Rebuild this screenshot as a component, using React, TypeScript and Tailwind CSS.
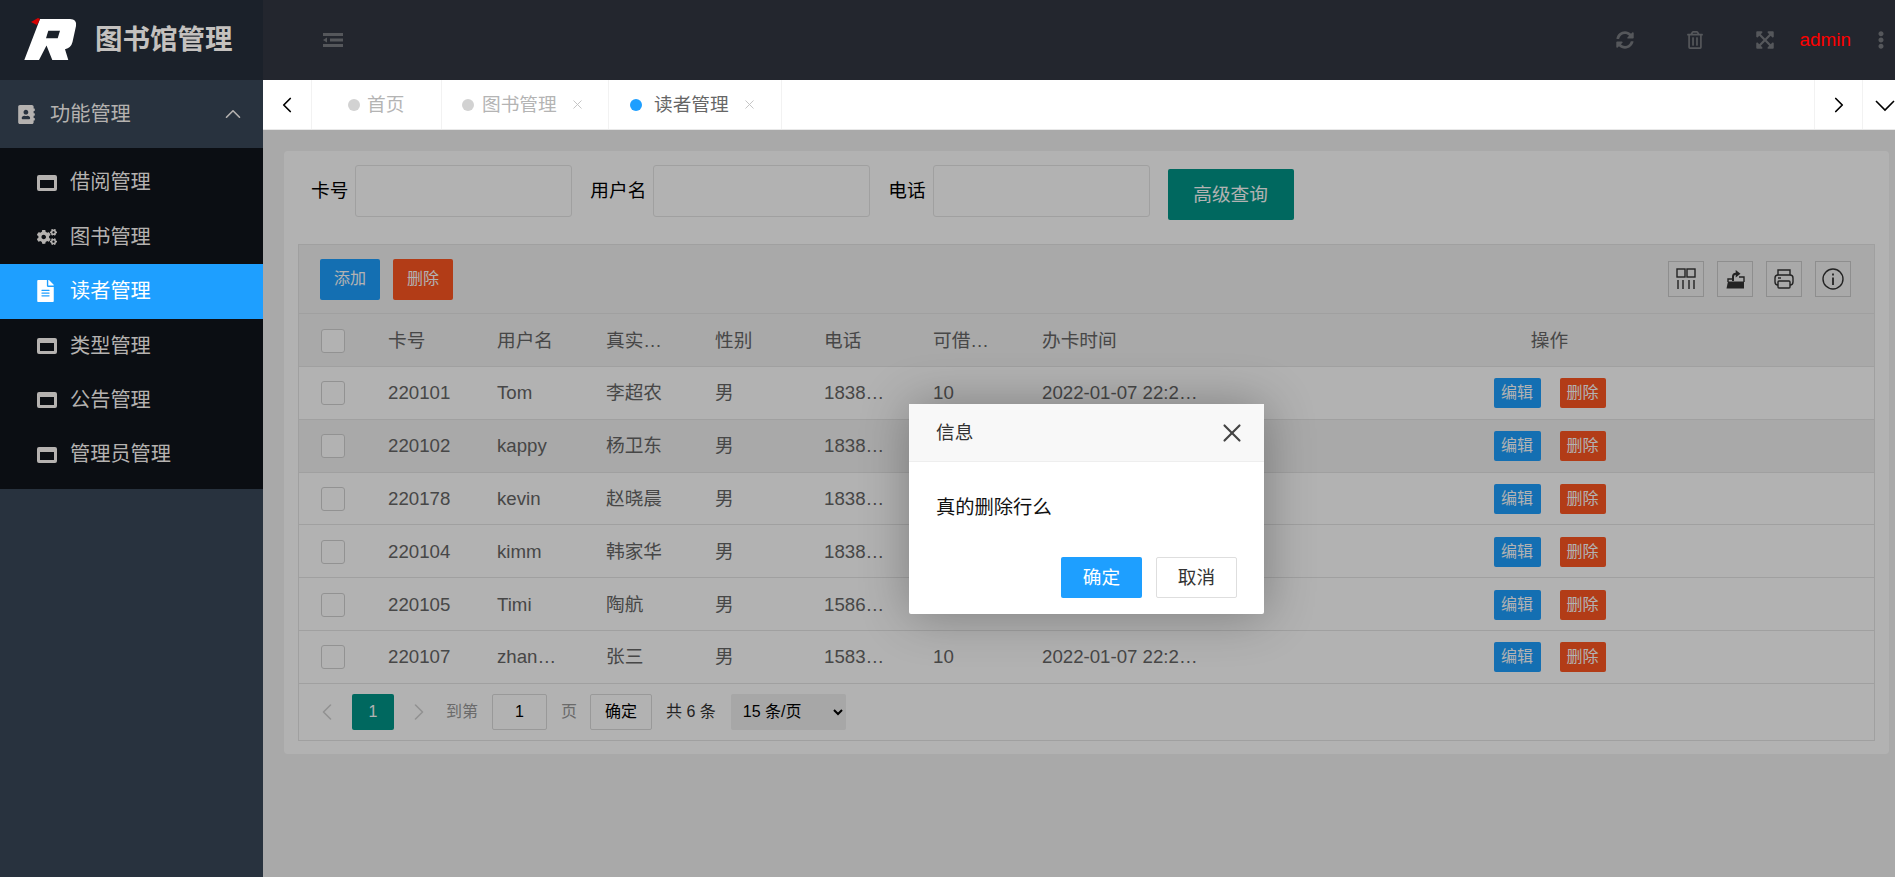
import {
  FaAddressBook,
  FaCogs,
  FaEllipsisV,
  FaExpandArrowsAlt,
  FaFileAlt,
  FaRegTrashAlt,
  FaSyncAlt,
} from 'react-icons/fa';
import { FiChevronLeft, FiChevronRight, FiChevronUp, FiX } from 'react-icons/fi';

const menuItems = [
  { label: '借阅管理', icon: 'window' },
  { label: '图书管理', icon: 'cogs' },
  { label: '读者管理', icon: 'file', active: true },
  { label: '类型管理', icon: 'window' },
  { label: '公告管理', icon: 'window' },
  { label: '管理员管理', icon: 'window' },
];

const readers = [
  { card: '220101', user: 'Tom', name: '李超农', phone: '1838…' },
  { card: '220102', user: 'kappy', name: '杨卫东', phone: '1838…', hover: true },
  { card: '220178', user: 'kevin', name: '赵晓晨', phone: '1838…' },
  { card: '220104', user: 'kimm', name: '韩家华', phone: '1838…' },
  { card: '220105', user: 'Timi', name: '陶航', phone: '1586…' },
  { card: '220107', user: 'zhan…', name: '张三', phone: '1583…' },
];

const Logo = () => (
  <svg viewBox="0 0 60 50" className="w-[60px] h-[50px] ml-[20px] shrink-0">
    <path
      fillRule="evenodd"
      d="M20 4 H50 Q57 4 56 11 L52.5 27 Q51 33 45 34.3 L48.3 45 H32.3 L26.5 30.5 L19 45 H4.3 Z M28.3 15.7 H40 L37.7 23.3 H26 Z"
      fill="#fff"
    />
    <path d="M11 7 L18 3 L20 4 L17 10 Z" fill="#d40000" />
  </svg>
);

const MenuIcon = ({ name }: { name: string }) => {
  if (name === 'cogs') return <FaCogs className="w-[20px] h-[20px]" />;
  if (name === 'file') return <FaFileAlt className="w-[17px] h-[22px]" />;
  return (
    <svg viewBox="0 0 20 16" className="w-[20px] h-[16px]" fill="currentColor">
      <path
        fillRule="evenodd"
        d="M2 0 H18 Q20 0 20 2 V14 Q20 16 18 16 H2 Q0 16 0 14 V2 Q0 0 2 0 Z M3 5 V13 H17 V5 Z"
      />
    </svg>
  );
};

const Sidebar = () => (
  <aside className="w-[263px] shrink-0 h-full bg-[#28323e] flex flex-col">
    <div className="h-[80px] bg-[#1b212a] flex items-center">
      <Logo />
      <span className="ml-[15px] text-[27.5px] font-bold text-[#c4c1bf] whitespace-nowrap">图书馆管理</span>
    </div>
    <div className="h-[68px] flex items-center pl-[17px] pr-[17px] text-[#b5b2b0]">
      <FaAddressBook className="w-[19px] h-[19px]" />
      <span className="ml-[14px] text-[20.2px]">功能管理</span>
      <FiChevronUp className="ml-auto w-[26px] h-[26px]" strokeWidth={1.5} />
    </div>
    <ul className="bg-[#0b0e13] pt-[7.4px] pb-[7.6px]">
      {menuItems.map(item => (
        <li
          key={item.label}
          className={`h-[54.4px] flex items-center pl-[37px] text-[20.2px] ${
            item.active ? 'bg-[#1e9fff] text-white' : 'text-[#b5b2b0]'
          }`}
        >
          <span className="w-[20px] flex justify-start">
            <MenuIcon name={item.icon} />
          </span>
          <span className="ml-[13px]">{item.label}</span>
        </li>
      ))}
    </ul>
  </aside>
);

const TopBar = () => (
  <header className="h-[80px] shrink-0 bg-[#23262e] flex items-center text-[#55575b]">
    <svg viewBox="0 0 20 14" className="ml-[60px] w-[20px] h-[14px]" fill="currentColor">
      <rect x="0" y="0" width="20" height="3" />
      <rect x="7" y="5.5" width="13" height="3" />
      <rect x="0" y="11" width="20" height="3" />
      <path d="M0 7 L4 4.5 V9.5 Z" />
    </svg>
    <div className="ml-auto flex items-center">
      <FaSyncAlt className="w-[18px] h-[18px]" />
      <FaRegTrashAlt className="ml-[53px] w-[16px] h-[18px]" />
      <FaExpandArrowsAlt className="ml-[52px] w-[20px] h-[20px]" />
      <span className="ml-[25px] text-[18.9px] text-[#ff0000]">admin</span>
      <FaEllipsisV className="ml-[22px] mr-[6px] w-[16px] h-[18px]" />
    </div>
  </header>
);

const ChevronDownWide = () => (
  <svg viewBox="0 0 24 24" className="w-[24px] h-[24px] shrink-0" fill="none" stroke="currentColor" strokeWidth="1.6">
    <path d="M3 8 L12 17 L21 8" />
  </svg>
);

const TabBar = () => (
  <div className="h-[50px] shrink-0 bg-white border-b border-[#e8e8e8] flex items-stretch text-[18.67px] text-[#b4b4b4]">
    <div className="w-[49px] border-r border-[#f2f2f2] flex items-center justify-center text-black">
      <FiChevronLeft className="w-[26px] h-[26px]" strokeWidth={1.6} />
    </div>
    <div className="w-[130px] border-r border-[#f2f2f2] flex items-center pl-[36px]">
      <span className="w-[12px] h-[12px] rounded-full bg-[#d2d2d2]" />
      <span className="ml-[7px]">首页</span>
    </div>
    <div className="w-[167px] border-r border-[#f2f2f2] flex items-center pl-[20px]">
      <span className="w-[12px] h-[12px] rounded-full bg-[#d2d2d2]" />
      <span className="ml-[8px]">图书管理</span>
      <FiX className="ml-[13px] w-[15px] h-[15px] text-[#c2c2c2]" strokeWidth={1.5} />
    </div>
    <div className="w-[173px] border-r border-[#f2f2f2] flex items-center pl-[21px] text-[#666]">
      <span className="w-[12px] h-[12px] rounded-full bg-[#1e9fff]" />
      <span className="ml-[12px]">读者管理</span>
      <FiX className="ml-[13px] w-[15px] h-[15px] text-[#c2c2c2]" strokeWidth={1.5} />
    </div>
    <div className="ml-auto w-[48px] border-l border-[#f2f2f2] flex items-center justify-center text-black">
      <FiChevronRight className="w-[26px] h-[26px]" strokeWidth={1.6} />
    </div>
    <div className="w-[33px] border-l border-[#f2f2f2] flex items-center pl-[10px] overflow-hidden text-black">
      <ChevronDownWide />
    </div>
  </div>
);

const SearchField = ({ label, width }: { label: string; width: string }) => (
  <label className="flex items-center gap-[7px] text-black">
    <span>{label}</span>
    <input className={`${width} h-[52px] bg-white border border-[#e6e6e6] rounded-[3px]`} />
  </label>
);

const ToolIcon = ({ children }: { children: React.ReactNode }) => (
  <div className="w-[36px] h-[36px] border border-[#ccc] flex items-center justify-center text-[#333]">
    <svg viewBox="0 0 24 24" className="w-[24px] h-[24px]" fill="none" stroke="currentColor" strokeWidth="1.4">
      {children}
    </svg>
  </div>
);

const Toolbar = () => (
  <div className="h-[69px] bg-[#f2f2f2] border-b border-[#e6e6e6] flex items-center pl-[21px] pr-[23px]">
    <button className="w-[60px] h-[41px] bg-[#1e9fff] text-white text-[16px] rounded-[2px]">添加</button>
    <button className="ml-[13px] w-[60px] h-[41px] bg-[#ff5722] text-white text-[16px] rounded-[2px]">删除</button>
    <div className="ml-auto flex gap-[13px]">
      <ToolIcon>
        <rect x="3" y="2" width="8" height="8" />
        <rect x="13" y="2" width="8" height="8" />
        <path d="M4 13 V22 M9 13 V22 M15 13 V22 M20 13 V22" />
      </ToolIcon>
      <ToolIcon>
        <path d="M16 10 H21 V15" />
        <path d="M3.5 21.5 L5 14.5 H21 V21.5 Z" fill="currentColor" stroke="none" />
        <path d="M5 15 V12 H9" />
        <path d="M10 14 V9.5 Q10 6.7 13 6.7" strokeWidth="2" />
        <path d="M12.7 3 L17.5 6.7 L12.7 10.4 Z" fill="currentColor" stroke="none" />
      </ToolIcon>
      <ToolIcon>
        <rect x="3" y="8" width="18" height="10" rx="3" />
        <path d="M6 8 V3 H18 V8" />
        <rect x="6" y="14" width="12" height="7" rx="1" fill="#f2f2f2" />
        <path d="M6 11 H9" />
      </ToolIcon>
      <ToolIcon>
        <circle cx="12" cy="12" r="10" />
        <path d="M12 10.5 V18 M12 6.5 V8.5" strokeWidth="1.8" />
      </ToolIcon>
    </div>
  </div>
);

const Checkbox = () => <span className="block w-[24px] h-[24px] ml-[22px] bg-white border border-[#d2d2d2] rounded-[3px]" />;

const HeaderRow = () => (
  <div className="h-[53px] pt-[1px] bg-[#f2f2f2] border-b border-[#e6e6e6] grid grid-cols-[69px_repeat(6,109px)_203px_1fr] items-center text-[#666]">
    <Checkbox />
    <span className="pl-[20px]">卡号</span>
    <span className="pl-[20px]">用户名</span>
    <span className="pl-[20px]">真实…</span>
    <span className="pl-[20px]">性别</span>
    <span className="pl-[20px]">电话</span>
    <span className="pl-[20px]">可借…</span>
    <span className="pl-[20px]">办卡时间</span>
    <span className="text-center">操作</span>
  </div>
);

const Row = ({ r }: { r: (typeof readers)[number] }) => (
  <div
    className={`h-[52.8px] pt-[1px] border-b border-[#e6e6e6] grid grid-cols-[69px_repeat(6,109px)_203px_1fr] items-center text-[#666] ${
      r.hover ? 'bg-[#f2f2f2]' : 'bg-white'
    }`}
  >
    <Checkbox />
    <span className="pl-[20px]">{r.card}</span>
    <span className="pl-[20px]">{r.user}</span>
    <span className="pl-[20px]">{r.name}</span>
    <span className="pl-[20px]">男</span>
    <span className="pl-[20px]">{r.phone}</span>
    <span className="pl-[20px]">10</span>
    <span className="pl-[20px] whitespace-nowrap">2022-01-07 22:2…</span>
    <div className="flex justify-center gap-[19px]">
      <button className="w-[47px] h-[30px] bg-[#1e9fff] text-white text-[16px] rounded-[2px]">编辑</button>
      <button className="w-[46px] h-[30px] bg-[#ff5722] text-white text-[16px] rounded-[2px]">删除</button>
    </div>
  </div>
);

const Pagination = () => (
  <div className="h-[56px] flex items-center pl-[14px] text-[16px] text-[#333]">
    <FiChevronLeft className="w-[28px] h-[28px] text-[#d2d2d2]" strokeWidth={1.4} />
    <span className="ml-[11px] w-[42px] h-[36px] bg-[#009688] text-white rounded-[2px] flex items-center justify-center">1</span>
    <FiChevronRight className="ml-[11px] w-[28px] h-[28px] text-[#d2d2d2]" strokeWidth={1.4} />
    <span className="ml-[13px] text-[#999]">到第</span>
    <span className="ml-[14px] w-[55px] h-[36px] bg-white border border-[#dcdcdc] rounded-[2px] flex items-center justify-center text-black">1</span>
    <span className="ml-[14px] text-[#999]">页</span>
    <span className="ml-[13px] w-[62px] h-[36px] bg-white border border-[#dcdcdc] rounded-[2px] flex items-center justify-center text-black">确定</span>
    <span className="ml-[14px]">共 6 条</span>
    <select className="ml-[15px] w-[115px] h-[36px] pl-[8px] bg-[#efefef] rounded-[2px] text-black outline-none" defaultValue="15">
      <option value="15">15 条/页</option>
    </select>
  </div>
);

const ConfirmDialog = () => (
  <div className="absolute left-[646px] top-[274px] w-[355px] h-[210px] bg-white rounded-[2px] shadow-[1px_1px_50px_rgba(0,0,0,0.3)] flex flex-col">
    <div className="h-[58px] shrink-0 bg-[#f8f8f8] border-b border-[#eee] flex items-center pl-[27px] pr-[17px] text-[#333]">
      <span>信息</span>
      <FiX className="ml-auto w-[30px] h-[30px] text-[#444]" strokeWidth={1.7} />
    </div>
    <p className="mt-[32px] ml-[27px] text-[19.3px] text-[#111]">真的删除行么</p>
    <div className="mt-auto mb-[16px] mr-[27px] flex justify-end gap-[14px]">
      <button className="w-[81px] h-[41px] bg-[#1e9fff] text-white rounded-[2px]">确定</button>
      <button className="w-[81px] h-[41px] bg-white border border-[#dedede] text-[#333] rounded-[2px]">取消</button>
    </div>
  </div>
);

const Content = () => (
  <main className="relative flex-1 bg-[#f2f2f2] p-[21px] pr-[6px] overflow-hidden">
    <div className="bg-white rounded-[4px] px-[14px] pt-[14px] pb-[13px]">
      <div className="h-[79px] pl-[13px] flex items-start gap-[18px]">
        <SearchField label="卡号" width="w-[217px]" />
        <SearchField label="用户名" width="w-[217px]" />
        <SearchField label="电话" width="w-[217px]" />
        <button className="mt-[4px] w-[126px] h-[51px] bg-[#009688] text-white rounded-[2px]">高级查询</button>
      </div>
      <div className="border border-[#e6e6e6]">
        <Toolbar />
        <HeaderRow />
        {readers.map(r => (
          <Row key={r.card} r={r} />
        ))}
        <Pagination />
      </div>
    </div>
    <div className="absolute inset-0 bg-black/30" />
    <ConfirmDialog />
  </main>
);

const App = () => (
  <div
    className="w-screen h-screen overflow-hidden flex text-[18.67px]"
    style={{ fontFamily: '"Liberation Sans", "Noto Sans CJK SC", sans-serif' }}
  >
    <Sidebar />
    <div className="flex-1 min-w-0 flex flex-col">
      <TopBar />
      <TabBar />
      <Content />
    </div>
  </div>
);

export default App;
